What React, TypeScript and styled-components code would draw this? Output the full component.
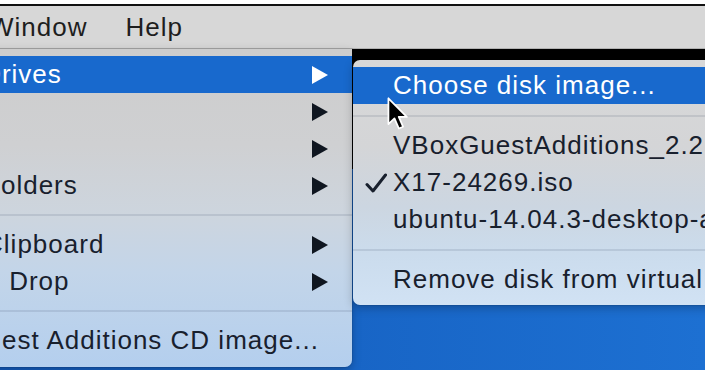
import React from "react";
import styled, { createGlobalStyle, css } from "styled-components";

const GlobalStyle = createGlobalStyle`
  html, body {
    margin: 0;
    padding: 0;
    width: 705px;
    height: 370px;
    overflow: hidden;
    background: #fff;
  }
  #root { width: 705px; height: 370px; }
`;

const Screen = styled.div`
  position: relative;
  width: 705px;
  height: 370px;
  overflow: hidden;
  display: flex;
  flex-direction: column;
  background: #fff;
  font-family: "Liberation Sans", Arial, sans-serif;
  font-size: 26px;
  letter-spacing: 1px;
`;

const TopEdge = styled.div`
  flex: none;
  height: 4px;
  background: #fff;
  border-bottom: 2px solid #111;
`;

const MenuBar = styled.nav`
  flex: none;
  height: 42px;
  background: #d7d7d7;
  border-bottom: 1px solid #b1b1b1;
  display: flex;
  color: #1e1e1e;
`;

const MenuBarList = styled.div`
  display: flex;
  margin-left: -30px;
`;

const MenuBarItem = styled.span`
  padding: 0 19px;
  line-height: 42px;
  white-space: nowrap;
`;

const Desktop = styled.div`
  position: relative;
  flex: 1;
  display: flex;
  flex-direction: column;
  background: linear-gradient(90deg, #145cbd 0%, #1865c6 50%, #1d70d2 100%);
`;

const VMWindow = styled.div`
  flex: none;
  height: 120px;
  background: #000;
`;

const MenuPanel = styled.div`
  position: absolute;
  box-sizing: border-box;
  display: flex;
  flex-direction: column;
  color: #18202d;
  box-shadow: 0 3px 10px rgba(0, 0, 0, 0.25), 0 0 0 1px rgba(0, 0, 0, 0.08);
`;

const DevicesMenu = styled(MenuPanel)`
  left: -154px;
  top: 0;
  width: 506px;
  padding: 7px 0 8px;
  border-radius: 0 0 7px 7px;
  z-index: 1;
  background: linear-gradient(
    180deg,
    #cdcdcd 0%,
    #cfd0d2 30%,
    #cdd5de 52%,
    #c3d5e9 70%,
    #b4cfee 100%
  );
`;

const DriveMenu = styled(MenuPanel)`
  left: 353px;
  top: 11px;
  width: 420px;
  padding: 7px 0 7px;
  border-radius: 7px 0 0 7px;
  z-index: 2;
  background: linear-gradient(
    180deg,
    #d8d8d8 0%,
    #d4d5d7 35%,
    #ccd6e1 60%,
    #cbdced 80%,
    #d1e2f4 100%
  );
`;

const Item = styled.div<{ $active?: boolean }>`
  display: flex;
  align-items: center;
  height: 37px;
  line-height: 37px;
  padding-right: 24px;
  white-space: nowrap;
  ${(p) =>
    p.$active &&
    css`
      background: #1869cd;
      color: #fff;
    `}
`;

const Gutter = styled.span`
  flex: none;
  width: 40px;
  box-sizing: border-box;
  padding-left: 12px;
  display: flex;
  align-items: center;
`;

const Label = styled.span`
  flex: none;
`;

const Arrow = styled.svg`
  flex: none;
  margin-left: auto;
  width: 16px;
  height: 18px;
`;

const Separator = styled.div<{ $height: number }>`
  flex: none;
  height: ${(p) => p.$height}px;
  display: flex;
  align-items: center;
  &::after {
    content: "";
    flex: 1;
    height: 2px;
    background: rgba(40, 60, 90, 0.12);
  }
`;

const Cursor = styled.svg`
  position: absolute;
  left: 387px;
  top: 97px;
  width: 23px;
  height: 34px;
  z-index: 5;
`;

const SubArrow = ({ active }: { active?: boolean }) => (
  <Arrow viewBox="0 0 16 18">
    <polygon points="0,0 16,9 0,18" fill={active ? "#fff" : "#0f1620"} />
  </Arrow>
);

const Check = () => (
  <svg width="22" height="20" viewBox="0 0 22 20">
    <path
      d="M2 11.5 L8 18 L20.5 2"
      fill="none"
      stroke="#18202d"
      strokeWidth="3"
      strokeLinecap="round"
      strokeLinejoin="round"
    />
  </svg>
);

type Entry =
  | { kind: "item"; label: string; sub?: boolean; active?: boolean; checked?: boolean }
  | { kind: "sep" };

const devices: Entry[] = [
  { kind: "item", label: "Optical Drives", sub: true, active: true },
  { kind: "item", label: "Network", sub: true },
  { kind: "item", label: "USB", sub: true },
  { kind: "item", label: "Shared Folders", sub: true },
  { kind: "sep" },
  { kind: "item", label: "Shared Clipboard", sub: true },
  { kind: "item", label: "Drag and Drop", sub: true },
  { kind: "sep" },
  { kind: "item", label: "Insert Guest Additions CD image..." },
];

const drives: Entry[] = [
  { kind: "item", label: "Choose disk image...", active: true },
  { kind: "sep" },
  { kind: "item", label: "VBoxGuestAdditions_2.2.0.iso" },
  { kind: "item", label: "X17-24269.iso", checked: true },
  { kind: "item", label: "ubuntu-14.04.3-desktop-amd64.iso" },
  { kind: "sep" },
  { kind: "item", label: "Remove disk from virtual drive" },
];

const renderEntries = (entries: Entry[], sepHeight: number) =>
  entries.map((e, i) =>
    e.kind === "sep" ? (
      <Separator key={i} $height={sepHeight} />
    ) : (
      <Item key={i} $active={e.active}>
        <Gutter>{e.checked && <Check />}</Gutter>
        <Label>{e.label}</Label>
        {e.sub && <SubArrow active={e.active} />}
      </Item>
    )
  );

export default function App() {
  return (
    <>
      <GlobalStyle />
      <Screen>
        <TopEdge />
        <MenuBar>
          <MenuBarList>
            <MenuBarItem>Window</MenuBarItem>
            <MenuBarItem>Help</MenuBarItem>
          </MenuBarList>
        </MenuBar>
        <Desktop>
          <VMWindow />
          <DevicesMenu>{renderEntries(devices, 22)}</DevicesMenu>
          <DriveMenu>{renderEntries(drives, 23)}</DriveMenu>
        </Desktop>
        <Cursor viewBox="0 0 18 27">
          <path
            d="M1 1 L1 21.5 L5.8 17 L9.3 25 L12.6 23.6 L9.2 15.8 L15.6 15.8 Z"
            fill="#000"
            stroke="#fff"
            strokeWidth="1.4"
            strokeLinejoin="round"
          />
        </Cursor>
      </Screen>
    </>
  );
}
